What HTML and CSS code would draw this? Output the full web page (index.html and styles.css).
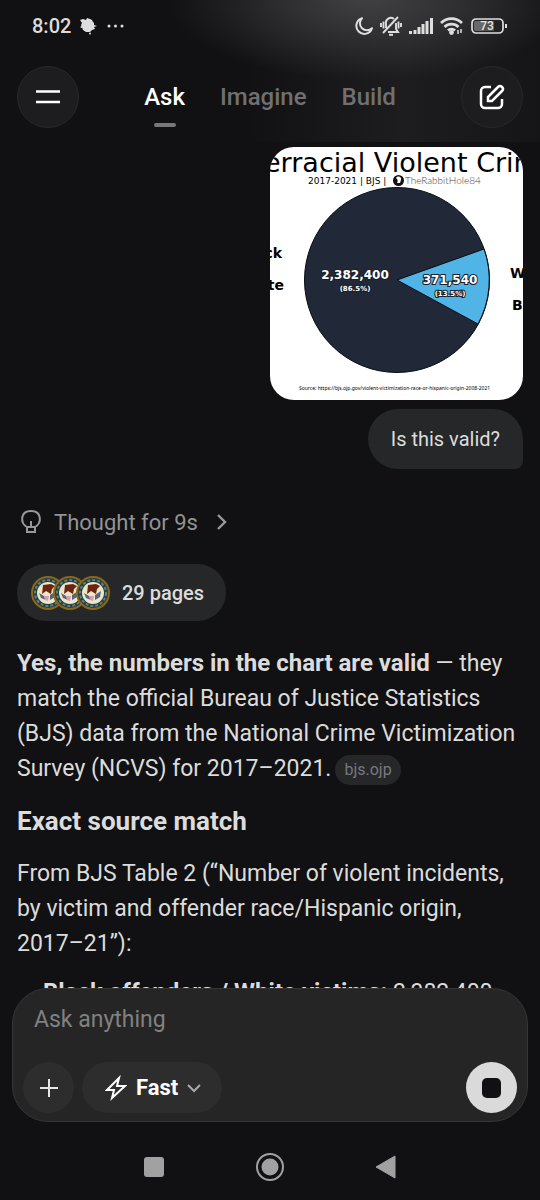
FILE: index.html
```
<!DOCTYPE html>
<html lang="en">
<head>
  <meta charset="UTF-8">
  <meta name="viewport" content="width=device-width, initial-scale=1.0">
  <link rel="stylesheet" href="styles.css">
  <title>Ask</title>
</head>
<body>
  <header class="top">
    <div class="status">
      <span class="clock">8:02</span>
      <svg width="18" height="18" viewBox="0 0 18 18" fill="#dedede"><path d="M3 2l3 1 1-2 3 1 2 1 1 2 1 1v2l3 1-3 1 1 2-3 1-2 2-4 0-3-2-1-3-1-2 1-2-2-3z"/><circle cx="1.500" cy="10" r="1"/><circle cx="10" cy="16.500" r="1"/></svg>
      <svg width="17" height="18" viewBox="0 0 17 18" fill="#dedede"><circle cx="2" cy="9" r="1.500"/><circle cx="8.500" cy="9" r="1.500"/><circle cx="15" cy="9" r="1.500"/></svg>
      <div class="status-icons">
        <svg width="18" height="18" viewBox="0 0 18 18" fill="none" stroke="#dedede" stroke-width="2"><path d="M7 1.200A8 8 0 1 0 17 11.200 7 7 0 0 1 7 1.200z" stroke-linejoin="round"/></svg>
        <svg width="22" height="20" viewBox="0 0 22 20" fill="none" stroke="#dedede" stroke-width="1.900"><path d="M6 12V8a5 5 0 0 1 8-5M16 7v6l2 3H8M3 17L18 1M1 7v4M3.500 5.500v7M18.500 5.500v7M21 7v4"/><path d="M9 18.800h4" stroke-width="2"/></svg>
        <svg width="24" height="18" viewBox="0 0 24 18" stroke="#dedede" stroke-width="3"><path d="M1.500 17v-3M6 17v-4M10 17v-7M14 17v-10M18 17v-13M22.500 17v-16"/></svg>
        <svg width="24" height="18" viewBox="0 0 24 18" fill="none" stroke="#dedede" stroke-width="2.800"><path d="M1 6a15 15 0 0 1 21 0M4.500 10a10 10 0 0 1 14 0M8 13.500a5 5 0 0 1 7 0"/><circle cx="11.500" cy="15.500" r="1" fill="#dedede"/><path d="M18 13v4M21 12v4" stroke-width="1.500"/></svg>
        <svg width="37" height="18" viewBox="0 0 37 18"><rect x="1" y="2" width="31" height="14" rx="4" fill="none" stroke="#dedede" stroke-width="1.700"/><path d="M5 4h8v10H5a2 2 0 0 1-2-2V6a2 2 0 0 1 2-2z" fill="#686868"/><path d="M13 4h10v10H13z" fill="#505052"/><path d="M35 7v4" stroke="#dedede" stroke-width="2"/><text x="16" y="13" class="battery">73</text></svg>
      </div>
    </div>
    <nav class="nav">
      <button class="round" aria-label="Menu"><svg width="24" height="24" viewBox="0 0 24 24" stroke="#fff" stroke-width="2.500"><path d="M0 6.500h24M0 17h24"/></svg></button>
      <div class="tabs">
        <a class="tab active" href="#">Ask</a>
        <a class="tab" href="#">Imagine</a>
        <a class="tab" href="#">Build</a>
      </div>
      <button class="round" aria-label="New chat"><svg width="26" height="26" viewBox="0 0 26 26" fill="none" stroke="#fff" stroke-width="2.500"><path d="M12 3H6a4 4 0 0 0-4 4v13a4 4 0 0 0 4 4h13a4 4 0 0 0 4-4v-5"/><path d="M9 17v-4L19 3a2.800 2.800 0 0 1 4 4L13 17z"/></svg></button>
    </nav>
  </header>

  <main class="chat">
    <svg class="chart" viewBox="0 0 253 253" role="img">
      <rect width="253" height="253" fill="#fff"/>
      <text x="-6" y="25" class="chart-title">erracial Violent Crime</text>
      <text x="38" y="37" class="chart-sub">2017-2021 | BJS |</text>
      <circle cx="128.500" cy="33.500" r="5.500" fill="#111"/><path d="M126 31c2-3 6-1 5 2l-1 3h-3c1-2 1-3-1-5z" fill="#fff"/>
      <text x="135" y="37" class="chart-handle">TheRabbitHole84</text>
      <circle cx="127" cy="133" r="92.500" fill="#212938" stroke="#080c14"/>
      <path d="M127 133L214 102A92.500 92.500 0 0 1 208 177z" fill="#50b4e6" stroke="#080c14"/>
      <text x="12" y="111" class="chart-label left">ck</text>
      <text x="14" y="143" class="chart-label left">te</text>
      <text x="240" y="131" class="chart-label">W</text>
      <text x="242" y="163" class="chart-label">B</text>
      <text x="85" y="132" class="chart-num">2,382,400</text>
      <text x="85" y="144" class="chart-pct">(86.5%)</text>
      <text x="180" y="137" class="chart-num">371,540</text>
      <text x="180" y="149" class="chart-pct">(13.5%)</text>
      <text x="29" y="243" class="chart-source">Source: https://bjs.ojp.gov/violent-victimization-race-or-hispanic-origin-2008-2021</text>
    </svg>
    <p class="bubble">Is this valid?</p>

    <button class="thought">
      <svg width="22" height="26" viewBox="0 0 22 26" fill="none" stroke="#999" stroke-width="2"><path d="M7 18c-7-4-7-16 4-16s11 12 4 16zM7 18v5h8v-5M11 12v6"/></svg>
      <span>Thought for 9s</span>
      <svg width="12" height="18" viewBox="0 0 12 18" fill="none" stroke="#999" stroke-width="2.400"><path d="M2 2l7 7-7 7"/></svg>
    </button>
    <button class="pages">
      <svg width="79" height="34" viewBox="0 0 79 34">
        <defs>
          <g id="seal">
            <circle cx="17" cy="17" r="16" fill="#1f3f52" stroke="#8c6818" stroke-width="2"/>
            <circle cx="17" cy="17" r="13" fill="none" stroke="#71805c" stroke-width="2" stroke-dasharray="3 2"/>
            <circle cx="17" cy="17" r="11" fill="#ece5c8"/>
            <path d="M12 9l8-1 4 2-3 3-1 5-5-3-4 3z" fill="#6b2410"/>
            <path d="M8 17l5 3 2 4-5-2zM19 19l6-4-1 6-5 3z" fill="#56667c"/>
            <path d="M13 20h5l-1 5-3-1z" fill="#d0a0b2"/>
          </g>
        </defs>
        <use href="#seal"/><use href="#seal" x="22"/><use href="#seal" x="45"/>
      </svg>
      <span>29 pages</span>
    </button>

    <article class="answer">
      <p><strong>Yes, the numbers in the chart are valid</strong> — they match the official Bureau of Justice Statistics (BJS) data from the National Crime Victimization Survey (NCVS) for 2017–2021.<a class="cite" href="#">bjs.ojp</a></p>
      <h2>Exact source match</h2>
      <p>From BJS Table 2 (“Number of violent incidents, by victim and offender race/Hispanic origin, 2017–21”):</p>
      <ul>
        <li><strong>Black offenders / White victims:</strong> 2,382,400</li>
      </ul>
    </article>
  </main>

  <form class="composer">
    <input type="text" placeholder="Ask anything" aria-label="Ask anything">
    <div class="tools">
      <button type="button" class="plus" aria-label="Attach"><svg width="20" height="20" viewBox="0 0 20 20" stroke="#e6e6e6" stroke-width="2"><path d="M10 1v18M1 10h18"/></svg></button>
      <button type="button" class="mode">
        <svg width="22" height="26" viewBox="0 0 22 26" fill="none" stroke="#fff" stroke-width="2"><path d="M14 3L2 15h7l-2 8L20 11h-8z"/></svg>
        <span>Fast</span>
        <svg width="14" height="10" viewBox="0 0 14 10" fill="none" stroke="#aaa" stroke-width="2"><path d="M1 2l6 6 6-6"/></svg>
      </button>
      <button type="button" class="stop" aria-label="Stop"><svg width="20" height="20" viewBox="0 0 20 20"><rect width="19" height="20" rx="5" fill="#111113"/></svg></button>
    </div>
  </form>

  <footer class="system">
    <button aria-label="Recents"><svg width="28" height="28" viewBox="0 0 28 28"><rect x="4" y="4" width="20" height="20" rx="3" fill="#a1a1a1"/></svg></button>
    <button aria-label="Home"><svg width="28" height="28" viewBox="0 0 28 28"><circle cx="14" cy="14" r="13" fill="none" stroke="#a1a1a1" stroke-width="2"/><circle cx="14" cy="14" r="8.500" fill="#a1a1a1"/></svg></button>
    <button aria-label="Back"><svg width="28" height="28" viewBox="0 0 28 28"><path d="M4 14L23 3v22z" fill="#a1a1a1" stroke="#a1a1a1" stroke-linejoin="round"/></svg></button>
  </footer>
</body>
</html>
```
FILE: styles.css
```
* {
  box-sizing: border-box;
}
html, body {
  height: 100%;
  margin: 0;
}
body {
  display: flex;
  flex-direction: column;
  overflow: hidden;
  background: #111113;
  color: #dcdcdc;
  font-family: Roboto, "Liberation Sans", sans-serif;
  font-size: 22px;
}
button {
  border: none;
  padding: 0;
  background: none;
  color: inherit;
  font: inherit;
  cursor: pointer;
}
svg {
  display: block;
  flex: none;
}
.top {
  flex: none;
  height: 142px;
  padding: 0 17px;
  background: radial-gradient(ellipse 200px 80px at 68% 0, #404042, transparent), linear-gradient(90deg, #111113 45%, #1d1d1f 75%, #151517);
}
.status {
  display: flex;
  align-items: center;
  gap: 9px;
  height: 52px;
  padding: 0 15px;
  font-size: 20px;
}
.clock {
  font-weight: 500;
}
.status-icons {
  display: flex;
  align-items: center;
  gap: 7px;
  margin-left: auto;
}
.battery {
  fill: #e6e6e6;
  font-size: 12px;
  font-weight: 500;
  text-anchor: middle;
}
.nav {
  display: flex;
  align-items: center;
  justify-content: space-between;
  height: 90px;
}
.round {
  display: grid;
  place-items: center;
  width: 62px;
  height: 62px;
  border: 1px solid #28282a;
  border-radius: 50%;
  background: #1d1d1f;
}
.tabs {
  display: flex;
  gap: 35px;
}
.tab {
  position: relative;
  color: #707072;
  font-size: 24px;
  font-weight: 500;
  line-height: 32px;
  text-decoration: none;
}
.active {
  color: #fff;
}
.active::after {
  content: "";
  position: absolute;
  left: 50%;
  bottom: -14px;
  width: 22px;
  height: 4px;
  margin-left: -11px;
  border-radius: 2px;
  background: #77777a;
}
.chat {
  display: flex;
  flex: 1;
  flex-direction: column;
  align-items: flex-start;
  min-height: 0;
  overflow: hidden;
  padding: 5px 17px 0;
}
.chart {
  align-self: flex-end;
  width: 253px;
  height: 253px;
  border-radius: 24px;
  font-family: "DejaVu Sans", sans-serif;
}
.chart-title {
  font-size: 27px;
}
.chart-sub {
  font-size: 9px;
}
.chart-handle {
  fill: #444;
  font-family: Lato, sans-serif;
  font-size: 10px;
  font-weight: 300;
}
.chart-label {
  font-size: 14px;
  font-weight: bold;
}
.left {
  text-anchor: end;
}
.chart-num, .chart-pct {
  fill: #fff;
  stroke: #1a1f29;
  stroke-width: 2px;
  paint-order: stroke;
  font-size: 12px;
  font-weight: bold;
  text-anchor: middle;
}
.chart-pct {
  font-size: 7px;
}
.chart-source {
  font-family: "Noto Sans", sans-serif;
  font-size: 5px;
}
.bubble {
  align-self: flex-end;
  flex: none;
  margin: 9px 0 0;
  padding: 0 23px;
  border-radius: 30px 30px 8px 30px;
  background: #262729;
  font-size: 20px;
  line-height: 60px;
}
.thought {
  display: flex;
  flex: none;
  align-items: center;
  gap: 12px;
  height: 32px;
  margin: 37px 0 26px;
  padding-left: 3px;
  color: #939395;
}
.thought span {
  margin-right: 6px;
}
.pages {
  display: flex;
  flex: none;
  align-items: center;
  gap: 12px;
  height: 57px;
  padding: 0 22px 0 14px;
  border-radius: 29px;
  background: #262729;
  font-size: 20px;
  font-weight: 500;
}
.answer {
  flex: none;
  margin-top: 25px;
  font-size: 23px;
  line-height: 35px;
}
.answer p {
  margin: 0;
}
.answer strong {
  font-size: 24px;
  line-height: 34px;
}
.answer h2 {
  margin: 18px 0 17px;
  font-size: 26px;
  line-height: 35px;
}
.answer ul {
  margin: 14px 0 0;
  padding-left: 26px;
}
.cite {
  display: inline-block;
  margin-left: 4px;
  padding: 0 9px;
  border-radius: 15px;
  background: #262729;
  color: #78797c;
  font-size: 16px;
  line-height: 30px;
  text-decoration: none;
  vertical-align: middle;
}
.composer {
  flex: none;
  margin: 0 12px;
  padding: 10px;
  height: 134px;
  border: 1px solid #363636;
  border-radius: 36px;
  background: #252525;
}
.composer input {
  display: block;
  width: 100%;
  height: 40px;
  padding: 0 11px;
  border: none;
  outline: none;
  background: none;
  color: #fff;
  font: inherit;
  font-size: 23px;
}
.composer input::placeholder {
  color: #818181;
}
.tools {
  display: flex;
  align-items: center;
  gap: 8px;
  margin-top: 23px;
}
.plus, .stop {
  display: grid;
  place-items: center;
  width: 51px;
  height: 51px;
  border-radius: 50%;
  background: #2d2d2d;
}
.mode {
  display: flex;
  align-items: center;
  gap: 9px;
  height: 51px;
  padding: 0 21px 0 23px;
  border-radius: 26px;
  background: #2d2d2d;
  color: #fff;
  font-weight: bold;
}
.stop {
  margin-left: auto;
  background: #dadada;
}
.system {
  display: flex;
  flex: none;
  align-items: center;
  justify-content: center;
  gap: 88px;
  height: 78px;
  padding-top: 12px;
}
```
